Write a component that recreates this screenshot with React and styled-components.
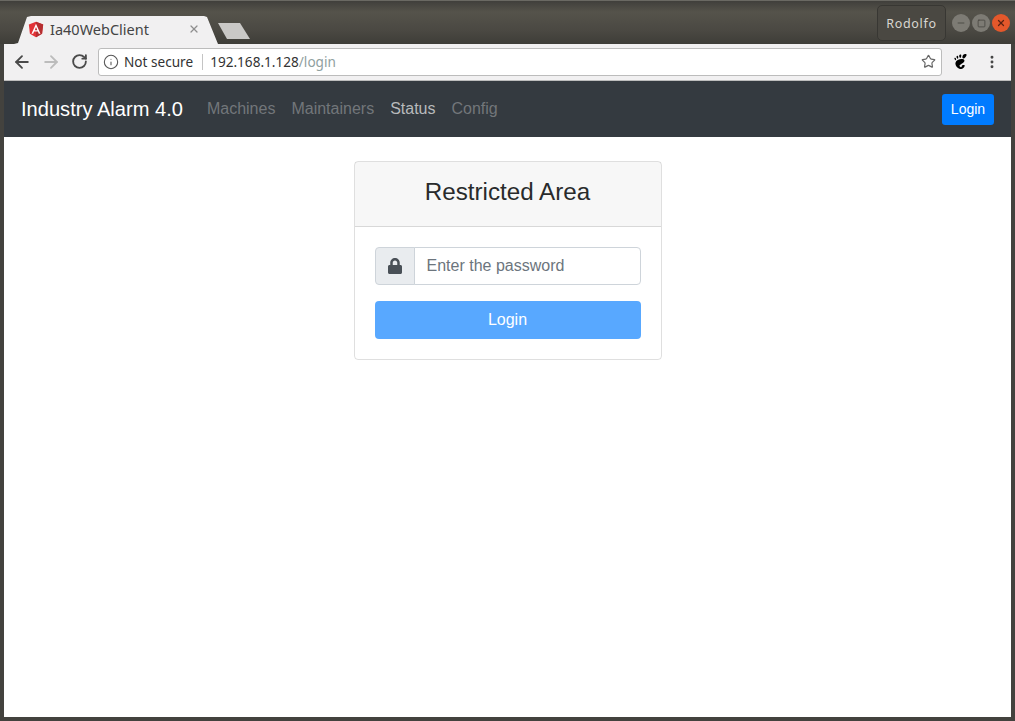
import React from 'react'
import styled, { createGlobalStyle } from 'styled-components'
import { ArrowLeft, ArrowRight, RotateCw, Info, Star, X, Minus, Square, EllipsisVertical } from 'lucide-react'
import { FaLock } from 'react-icons/fa'
import { SiGnome } from 'react-icons/si'

const GlobalStyle = createGlobalStyle`
html, body {
  margin: 0;
  padding: 0;
  height: 100%;
  overflow: hidden;
  background: #3f3e3a;
}
* { box-sizing: border-box; }
`

const Window = styled.div`
width: 1015px;
height: 721px;
display: flex;
flex-direction: column;
padding: 0 4px 4px 4px;
background: #43423e;
border-top: 1px solid #6a6963;
font-family: 'Liberation Sans', Arial, sans-serif;
`

const TitleBar = styled.div`
height: 43px;
flex-shrink: 0;
margin: 0 -4px;
display: flex;
align-items: flex-end;
padding-left: 14px;
background: linear-gradient(#403f3b 0, #55534b 11px, #4a4842 30px, #3e3d38 100%);
`

const Tab = styled.div`
width: 204px;
height: 28px;
display: flex;
align-items: center;
gap: 6px;
padding: 0 18px 2px 14px;
background: #f1f0f1;
clip-path: polygon(0 100%, 4px 96%, 13px 4%, 17px 0, 190px 0, 193px 4%, 204px 100%);
`

const TabTitle = styled.span`
flex: 1;
font-family: 'Noto Sans', sans-serif;
font-size: 14.5px;
color: #444;
white-space: nowrap;
`

const TabClose = styled(X)`
width: 12px;
height: 12px;
color: #8e8e8e;
`

const NewTab = styled.div`
width: 32px;
height: 16px;
margin: 0 0 5px 0;
background: #c9c8c6;
clip-path: polygon(0 0, 22px 0, 32px 100%, 9px 100%);
`

const Spacer = styled.div`
flex: 1;
`

const TitleRight = styled.div`
align-self: flex-start;
display: flex;
align-items: center;
gap: 2px;
margin: 4px 5px 0 0;
`

const Profile = styled.div`
width: 69px;
height: 36px;
display: flex;
align-items: center;
justify-content: center;
margin-right: 4px;
border: 1px solid #383733;
border-radius: 5px;
background: #4a4842;
color: #d8d6d0;
font-family: 'Noto Sans', sans-serif;
font-size: 12.5px;
letter-spacing: 0.7px;
`

const WinButton = styled.div`
width: 18px;
height: 18px;
display: flex;
align-items: center;
justify-content: center;
border-radius: 50%;
background: ${props => props.close ? '#e4582b' : '#7d7b74'};
color: ${props => props.close ? '#5b2212' : '#44433e'};
`

const Toolbar = styled.div`
height: 37px;
flex-shrink: 0;
display: flex;
align-items: center;
background: #f1f0f1;
border-bottom: 1px solid #bdbdbd;
padding: 0 3px 1px 0;
`

const NavButton = styled.div`
width: ${props => props.w || 28}px;
height: 28px;
display: flex;
align-items: center;
justify-content: center;
color: ${props => props.off ? '#bcbcbc' : '#4a4a4a'};
`

const Omnibox = styled.div`
flex: 1;
height: 28px;
margin: 0 2px 0 2px;
display: flex;
align-items: center;
padding: 0 5px 0 4px;
background: #fff;
border: 1px solid #bcbcbc;
border-radius: 3px;
font-family: 'Noto Sans', sans-serif;
font-size: 13.6px;
color: #333;
`

const Secure = styled.span`
margin-left: 5px;
padding-right: 9px;
border-right: 1px solid #c4c4c4;
line-height: 16px;
`

const Host = styled.span`
margin-left: 7px;
`

const Path = styled.span`
color: #8fa0a0;
`

const Navbar = styled.nav`
height: 56px;
flex-shrink: 0;
display: flex;
align-items: center;
padding: 0 17px 0 17px;
background: #343a40;
`

const Brand = styled.a`
margin-right: 16px;
font-size: 20.1px;
color: #fff;
white-space: nowrap;
`

const NavLinks = styled.div`
flex: 1;
display: flex;
`

const NavLink = styled.a`
padding: 0 8px;
font-size: 16px;
color: ${props => props.active ? '#b8babc' : '#72767a'};
`

const SmallButton = styled.button`
width: 52px;
height: 31px;
padding: 0;
border: none;
border-radius: 3.2px;
background: #007bff;
color: #fff;
font-family: inherit;
font-size: 14px;
`

const Content = styled.main`
flex: 1;
display: flex;
justify-content: center;
align-items: flex-start;
padding-top: 24px;
background: #fff;
`

const Card = styled.div`
width: 308px;
border: 1px solid rgba(0,0,0,.125);
border-radius: 4px;
`

const CardHeader = styled.div`
height: 65px;
display: flex;
align-items: center;
justify-content: center;
padding-bottom: 4px;
background: rgba(0,0,0,.03);
border-bottom: 1px solid rgba(0,0,0,.125);
font-size: 24.2px;
color: #292b2c;
`

const CardBody = styled.div`
display: flex;
flex-direction: column;
gap: 16px;
padding: 20px;
`

const InputGroup = styled.div`
display: flex;
height: 38px;
`

const Addon = styled.div`
width: 40px;
display: flex;
align-items: center;
justify-content: center;
background: #e9ecef;
border: 1px solid #ced4da;
border-radius: 4px 0 0 4px;
color: #495057;
font-size: 16px;
`

const Input = styled.input`
flex: 1;
min-width: 0;
margin-left: -1px;
padding: 0 12px;
border: 1px solid #ced4da;
border-radius: 0 4px 4px 0;
font-family: inherit;
font-size: 16px;
color: #495057;
&::placeholder { color: #6c757d; opacity: 1; }
`

const BlockButton = styled.button`
height: 38px;
border: none;
border-radius: 4px;
background: #007bff;
opacity: .65;
color: #fff;
font-family: inherit;
font-size: 16px;
`

const AngularLogo = () => (
  <svg width="16" height="17" viewBox="0 0 250 250" style={{ flexShrink: 0 }}>
    <polygon fill="#e23237" points="125,5 13,45 30,193 125,245 220,193 237,45" />
    <polygon fill="#b52e31" points="125,5 125,245 220,193 237,45" />
    <path fill="#fff" d="M125 35 L55 192 H81 L95 157 H155 L169 192 H195 Z M145 135 H105 L125 87 Z" />
  </svg>
)

const App = () => {
  return (
    <Window>
      <GlobalStyle />
      <TitleBar>
        <Tab>
          <AngularLogo />
          <TabTitle>Ia40WebClient</TabTitle>
          <TabClose strokeWidth={2.5} />
        </Tab>
        <NewTab />
        <Spacer />
        <TitleRight>
          <Profile>Rodolfo</Profile>
          <WinButton><Minus size={10} strokeWidth={2} /></WinButton>
          <WinButton><Square size={9} strokeWidth={2} /></WinButton>
          <WinButton close><X size={10} strokeWidth={3} /></WinButton>
        </TitleRight>
      </TitleBar>
      <Toolbar>
        <NavButton w={36}><ArrowLeft size={20} strokeWidth={2.2} /></NavButton>
        <NavButton w={22} off><ArrowRight size={20} strokeWidth={2.2} /></NavButton>
        <NavButton w={34}><RotateCw size={17} strokeWidth={2.6} /></NavButton>
        <Omnibox>
          <Info size={16} strokeWidth={1.6} color="#555" />
          <Secure>Not secure</Secure>
          <Host>192.168.1.128<Path>/login</Path></Host>
          <Spacer />
          <Star size={15} strokeWidth={1.9} color="#666" />
        </Omnibox>
        <NavButton w={32}><SiGnome size={15} color="#000" /></NavButton>
        <NavButton w={32}><EllipsisVertical size={16} strokeWidth={2.4} color="#444" /></NavButton>
      </Toolbar>
      <Navbar>
        <Brand>Industry Alarm 4.0</Brand>
        <NavLinks>
          <NavLink>Machines</NavLink>
          <NavLink>Maintainers</NavLink>
          <NavLink active>Status</NavLink>
          <NavLink>Config</NavLink>
        </NavLinks>
        <SmallButton>Login</SmallButton>
      </Navbar>
      <Content>
        <Card>
          <CardHeader>Restricted Area</CardHeader>
          <CardBody>
            <InputGroup>
              <Addon><FaLock /></Addon>
              <Input type="password" placeholder="Enter the password" />
            </InputGroup>
            <BlockButton>Login</BlockButton>
          </CardBody>
        </Card>
      </Content>
    </Window>
  )
}

export default App
